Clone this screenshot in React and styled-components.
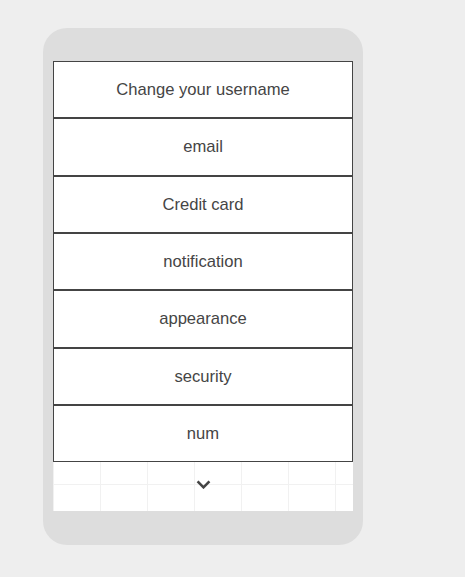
import React from "react";
import styled, { createGlobalStyle } from "styled-components";

const items = [
	"Change your username",
	"email",
	"Credit card",
	"notification",
	"appearance",
	"security",
	"num",
];

function App() {
	return (
		<>
			<GlobalStyle />
			<Page>
				<Phone>
					<Screen>
						{items.map((label) => (
							<Row key={label}>{label}</Row>
						))}
						<More>
							<svg width="15" height="9" viewBox="0 0 15 9">
								<polyline
									points="1.6,1.4 7.5,7.3 13.4,1.4"
									fill="none"
									stroke="#444"
									strokeWidth="2.6"
								/>
							</svg>
						</More>
					</Screen>
				</Phone>
			</Page>
		</>
	);
}

const GlobalStyle = createGlobalStyle`
	body {
		margin: 0;
		background: #eeeeee;
		font-family: "Liberation Sans", Arial, sans-serif;
	}
`;

const Page = styled.div`
	padding: 28px 0 0 43px;
`;

const Phone = styled.div`
	width: 320px;
	box-sizing: border-box;
	padding: 33px 10px 34px;
	background: #dddddd;
	border-radius: 24px;
`;

const Screen = styled.div`
	height: 450px;
	display: flex;
	flex-direction: column;
	background-color: #fff;
	background-image: linear-gradient(to right, #f1f1f1 1px, transparent 1px),
		linear-gradient(to bottom, #f1f1f1 1px, transparent 1px);
	background-size: 47px 47px;
	overflow: hidden;
`;

const Row = styled.div`
	flex-shrink: 0;
	padding: 18px 0;
	line-height: 19.35px;
	font-size: 16.6px;
	color: #454545;
	text-align: center;
	background: #fff;
	border: 1px solid #444;
`;

const More = styled.div`
	flex: 1;
	display: flex;
	align-items: center;
	justify-content: center;
	padding-bottom: 4px;
`;

export default App;
